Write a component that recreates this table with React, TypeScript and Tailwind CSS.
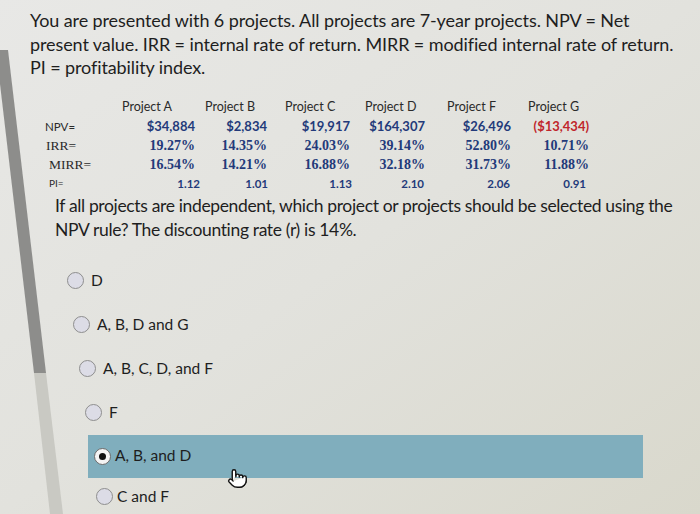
import { Pointer } from "lucide-react";

const projects = [
  { name: "Project A", npv: "$34,884", irr: "19.27%", mirr: "16.54%", pi: "1.12" },
  { name: "Project B", npv: "$2,834", irr: "14.35%", mirr: "14.21%", pi: "1.01" },
  { name: "Project C", npv: "$19,917", irr: "24.03%", mirr: "16.88%", pi: "1.13" },
  { name: "Project D", npv: "$164,307", irr: "39.14%", mirr: "32.18%", pi: "2.10" },
  { name: "Project F", npv: "$26,496", irr: "52.80%", mirr: "31.73%", pi: "2.06" },
  { name: "Project G", npv: "($13,434)", irr: "10.71%", mirr: "11.88%", pi: "0.91" },
];

const headPad = ["pl-[2px]", "pl-[5px]", "pl-[5px]", "pl-[5px]", "pl-[7px]", "pl-[8px]"];
const valPad = ["pr-[5px]", "pr-[13px]", "pr-[10px]", "pr-[15px]", "pr-[9px]", "pr-[11px]"];
const piPad = ["pr-0", "pr-[12px]", "pr-[8px]", "pr-[16px]", "pr-[10px]", "pr-[14px]"];

const options = [
  { label: "D", indent: "ml-[67px]" },
  { label: "A, B, D and G", indent: "ml-[73px]" },
  { label: "A, B, C, D, and F", indent: "ml-[79px]" },
  { label: "F", indent: "ml-[85px]" },
];

function Radio({ checked = false }: { checked?: boolean }) {
  return checked ? (
    <span className="flex h-[17px] w-[17px] shrink-0 items-center justify-center rounded-full border border-[#6b6b6b] bg-[#f4f4f4]">
      <span className="h-[7px] w-[7px] rounded-full bg-[#111]" />
    </span>
  ) : (
    <span className="h-[17px] w-[17px] shrink-0 rounded-full border border-[#8e8e8e] bg-[#dcdce6]" />
  );
}

export default function App() {
  const sans = "font-['Lato','Open_Sans',sans-serif]";
  const serif = "font-['Liberation_Serif','DejaVu_Serif',serif]";

  return (
    <div className={`relative h-[514px] w-[700px] overflow-hidden bg-gradient-to-br from-[#e8e8e6] via-[#e2e2dd] to-[#d9d8cc] text-[#1e1e1e] ${sans}`}>
      {/* slanted scrollbar in the photo */}
      <svg className="absolute left-0 top-0" width="80" height="514" viewBox="0 0 80 514">
        <polygon points="-4,50 8,50 46,373 34,373" fill="#8d8d8b" />
        <polygon points="34,373 46,373 63,514 50,514" fill="#c9c9c3" />
      </svg>

      <div className="relative">
        <p className="pl-[30px] pt-[9px] text-[18px] leading-[23.5px] tracking-[-0.1px]">
          You are presented with 6 projects. All projects are 7-year projects. NPV = Net
          <br />
          present value. IRR = internal rate of return. MIRR = modified internal rate of return.
          <br />
          PI = profitability index.
        </p>

        <div className="ml-[45px] mt-[17px] grid grid-cols-[75px_80px_80px_80px_80px_80px_80px] text-[#233a7a]">
          <div className="h-[20px]" />
          {projects.map((p, i) => (
            <div key={p.name} className={`h-[20px] text-[12.5px] leading-[20px] text-[#2a2a2a] ${headPad[i]}`}>
              {p.name}
            </div>
          ))}

          <div className="h-[19px] text-[11.5px] leading-[19px] text-[#2a2a2a]">NPV=</div>
          {projects.map((p, i) => (
            <div
              key={p.name}
              className={`h-[19px] text-right text-[13px] font-bold leading-[19px] ${valPad[i]} ${i === 5 ? "text-[#c0262b]" : ""}`}
            >
              {p.npv}
            </div>
          ))}

          <div className={`h-[19px] pl-[1px] text-[13.5px] leading-[19px] text-[#2a2a2a] ${serif}`}>IRR=</div>
          {projects.map((p, i) => (
            <div key={p.name} className={`h-[19px] text-right text-[14px] font-bold leading-[19px] ${serif} ${valPad[i]}`}>
              {p.irr}
            </div>
          ))}

          <div className={`h-[19px] pl-[4px] text-[13.5px] leading-[19px] text-[#2a2a2a] ${serif}`}>MIRR=</div>
          {projects.map((p, i) => (
            <div key={p.name} className={`h-[19px] text-right text-[14px] font-bold leading-[19px] ${serif} ${valPad[i]}`}>
              {p.mirr}
            </div>
          ))}

          <div className="h-[19px] pl-[4px] text-[10px] leading-[19px] text-[#2a2a2a]">PI=</div>
          {projects.map((p, i) => (
            <div key={p.name} className={`h-[19px] text-right text-[11.5px] font-bold leading-[19px] ${piPad[i]}`}>
              {p.pi}
            </div>
          ))}
        </div>

        <p className="ml-[55px] mt-[1px] text-[17.5px] leading-[24px] tracking-[-0.35px]">
          If all projects are independent, which project or projects should be selected using the
          <br />
          NPV rule? The discounting rate (r) is 14%.
        </p>

        <div className="mt-[17px] flex flex-col text-[15.5px]">
          {options.map((o) => (
            <div key={o.label} className={`flex h-[44px] items-center gap-[7px] ${o.indent}`}>
              <Radio />
              <span>{o.label}</span>
            </div>
          ))}
          <div className="ml-[88px] flex h-[43px] w-[555px] items-center gap-[4px] bg-[#80aebd] pl-[6px]">
            <Radio checked />
            <span>A, B, and D</span>
          </div>
          <div className="ml-[96px] flex h-[38px] items-center gap-[4px]">
            <Radio />
            <span>C and F</span>
          </div>
        </div>
      </div>

      <Pointer className="absolute left-[227px] top-[468px] h-[21px] w-[21px] fill-white text-[#111]" strokeWidth={1.6} />
    </div>
  );
}
